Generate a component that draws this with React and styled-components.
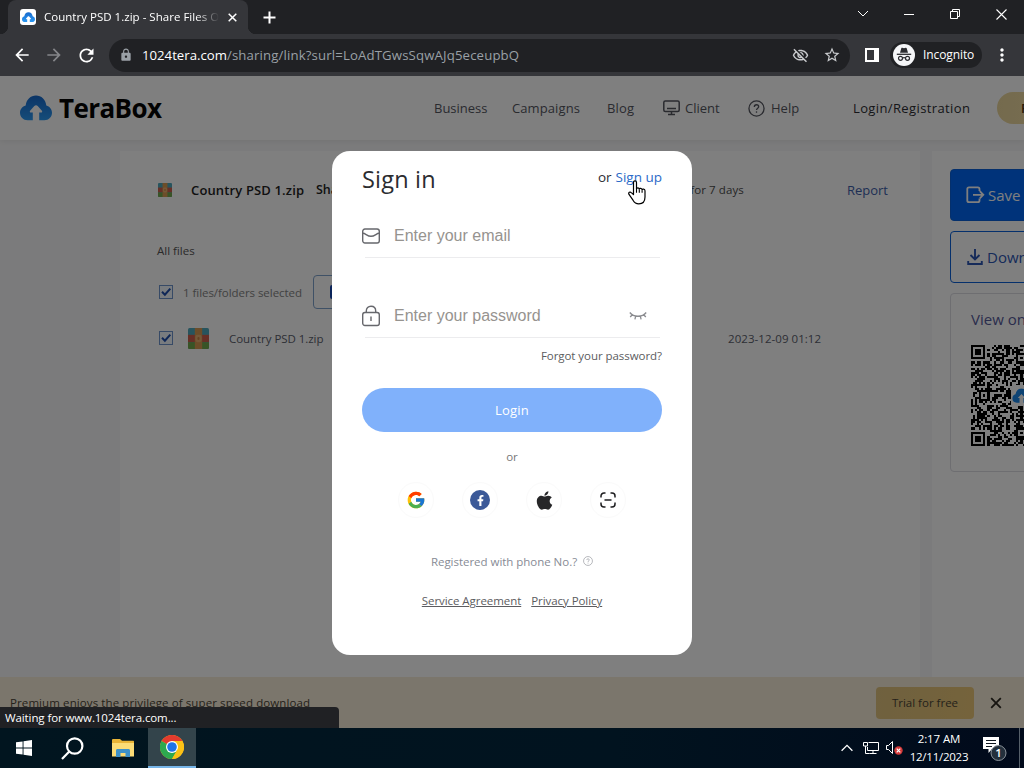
import React from "react";
import styled, { createGlobalStyle } from "styled-components";
import { FcGoogle } from "react-icons/fc";
import { FaApple, FaFacebookF } from "react-icons/fa";
import {
  MdArrowBack,
  MdArrowForward,
  MdLock,
  MdMoreVert,
  MdOutlineVisibilityOff,
  MdRefresh,
  MdStarBorder,
} from "react-icons/md";

// styles
const GlobalStyle = createGlobalStyle`
  * {
    box-sizing: border-box;
  }
  body {
    margin: 0;
    overflow: hidden;
    font-family: "Open Sans", "Noto Sans", sans-serif;
  }
  svg {
    display: block;
    flex: none;
  }
`;

const Screen = styled.div`
  width: 1024px;
  height: 768px;
  display: flex;
  flex-direction: column;
  overflow: hidden;
  background: #202124;
`;

const Text = styled.span`
  flex: none;
  white-space: nowrap;
  font-size: ${(p) => p.$size || 13}px;
  font-weight: ${(p) => p.$weight || 400};
  letter-spacing: ${(p) => p.$spacing || 0}px;
  color: ${(p) => p.$color || "inherit"};
  line-height: 20px;
`;

const TabStrip = styled.div`
  height: 34px;
  display: flex;
  align-items: center;
  padding-left: 8px;
  background: #202124;
  color: #fff;
`;

const Tab = styled.div`
  position: relative;
  width: 240px;
  height: 34px;
  padding: 0 10px 0 12px;
  display: flex;
  align-items: center;
  border-radius: 8px 8px 0 0;
  background: #35363a;
  &::before,
  &::after {
    content: "";
    position: absolute;
    bottom: 0;
    width: 8px;
    height: 8px;
  }
  &::before {
    left: -8px;
    background: radial-gradient(circle at 0 0, transparent 8px, #35363a 8.5px);
  }
  &::after {
    right: -8px;
    background: radial-gradient(circle at 100% 0, transparent 8px, #35363a 8.5px);
  }
`;

const Favicon = styled.div`
  width: 16px;
  height: 16px;
  margin-right: 8px;
  display: flex;
  align-items: center;
  justify-content: center;
  border-radius: 3px;
  background: #fff;
`;

const TabTitle = styled.div`
  width: 175px;
  margin-right: 9px;
  overflow: hidden;
  display: flex;
  mask-image: linear-gradient(to right, #000 152px, transparent 175px);
`;

const NewTab = styled.div`
  margin-left: 15px;
  flex: 1;
`;

const WindowButton = styled.div`
  width: 46px;
  height: 28px;
  margin-bottom: 6px;
  display: flex;
  align-items: center;
  justify-content: center;
`;

const Toolbar = styled.div`
  height: 42px;
  padding-left: 6px;
  display: flex;
  align-items: center;
  background: #35363a;
  color: #fff;
`;

const ToolButton = styled.div`
  width: 32px;
  margin-left: ${(p) => p.$before || 0}px;
  display: flex;
  justify-content: center;
  color: ${(p) => (p.$muted ? "#85868a" : "#fff")};
`;

const Omnibox = styled.div`
  width: 741px;
  height: 33px;
  margin-left: 7px;
  padding: 0 9px 0 10px;
  display: flex;
  align-items: center;
  border-radius: 17px;
  background: #202124;
  color: #9aa0a6;
`;

const Url = styled.div`
  flex: 1;
  margin-left: 9px;
  display: flex;
`;

const OmniIcon = styled.div`
  margin-left: 14px;
  color: #c8cacd;
`;

const SidePanel = styled.div`
  width: 14px;
  height: 14px;
  margin: 0 11px 0 15px;
  border: 2px solid #fff;
  border-right-width: 5px;
`;

const Incognito = styled.div`
  width: 92px;
  height: 26px;
  padding-left: 3px;
  display: flex;
  align-items: center;
  gap: 8px;
  border-radius: 13px;
  background: #202124;
`;

const Page = styled.div`
  position: relative;
  height: 652px;
  display: flex;
  flex-direction: column;
  background: #f7f7f8;
  overflow: hidden;
`;

const SiteHeader = styled.header`
  height: 64px;
  padding-left: 20px;
  display: flex;
  align-items: center;
  background: #fff;
  box-shadow: 0 1px 6px rgba(0, 0, 0, 0.08);
  z-index: 1;
`;

const Brand = styled.div`
  width: 414px;
  display: flex;
  align-items: center;
  gap: 7px;
  flex: none;
`;

const Nav = styled.nav`
  display: grid;
  grid-template-columns: 78px 95px 56px 85px 105px 144px 80px;
  align-items: center;
  color: #54565f;
`;

const NavItem = styled.div`
  display: flex;
  align-items: center;
  gap: ${(p) => p.$gap || 0}px;
`;

const PremiumPill = styled.div`
  height: 32px;
  padding-left: 24px;
  display: flex;
  align-items: center;
  border-radius: 16px;
  background: linear-gradient(90deg, #e9d59b, #f3dfab);
`;

const Content = styled.main`
  flex: 1;
  display: flex;
  gap: 12px;
  padding: 11px 0 0 120px;
`;

const FilesCard = styled.section`
  width: 800px;
  flex: none;
  padding: 18px 32px 0 38px;
  background: #fff;
`;

const TitleRow = styled.div`
  height: 42px;
  display: flex;
  align-items: center;
  color: #222;
`;

const Title = styled.div`
  display: flex;
  flex: none;
  width: 125px;
  margin-left: 19px;
`;

const Expiry = styled.div`
  width: 428px;
  display: flex;
  justify-content: space-between;
  margin-right: 103px;
`;

const Crumb = styled.div`
  height: 80px;
  margin-left: -1px;
  display: flex;
  align-items: center;
  color: #555;
`;

const SelectRow = styled.div`
  height: 34px;
  margin-top: -16px;
  padding-left: 1px;
  display: flex;
  align-items: center;
  color: #848484;
`;

const Checkbox = styled.div`
  width: 14px;
  height: 14px;
  display: flex;
  align-items: center;
  justify-content: center;
  border: 1px solid #6f94cc;
  background: #f2f8ff;
`;

const SelectLabel = styled.div`
  width: 130px;
  margin: 2px 0 0 10px;
  display: flex;
`;

const GhostButton = styled.div`
  width: 110px;
  height: 34px;
  padding-left: 16px;
  display: flex;
  align-items: center;
  border: 1px solid #7fa2cc;
  border-radius: 4px;
`;

const FileRow = styled.div`
  height: 58px;
  padding-left: 1px;
  display: grid;
  grid-template-columns: 29px 41px 499px 100px;
  align-items: center;
  color: #5b606c;
  ${Text} {
    padding-top: 1px;
  }
`;

const SideCard = styled.aside`
  width: 300px;
  flex: none;
  padding: 18px;
  display: flex;
  flex-direction: column;
  gap: 10px;
  background: #fff;
`;

const ActionButton = styled.div`
  height: 52px;
  padding-left: 15px;
  display: flex;
  align-items: center;
  gap: 3px;
  flex: none;
  border: 1px solid #0b61d8;
  border-radius: 4px;
  background: ${(p) => (p.$primary ? "#0067f4" : "#fff")};
  color: ${(p) => (p.$primary ? "#fff" : "#2d56b4")};
`;

const QrCard = styled.div`
  height: 179px;
  padding: 15px 0 0 20px;
  display: flex;
  flex-direction: column;
  gap: 16px;
  border: 1px solid #dcdce2;
  border-radius: 4px;
`;

const PremiumBar = styled.div`
  height: 51px;
  padding: 0 22px 0 10px;
  display: flex;
  align-items: center;
  background: #f6ecd8;
  color: #4b4436;
`;

const TrialButton = styled.div`
  width: 98px;
  height: 32px;
  margin: 0 16px 0 auto;
  display: flex;
  align-items: center;
  justify-content: center;
  border-radius: 4px;
  background: linear-gradient(100deg, #dfc27e, #ebc777);
`;

const Overlay = styled.div`
  position: absolute;
  inset: 0;
  z-index: 2;
  padding-top: 75px;
  display: flex;
  justify-content: center;
  align-items: flex-start;
  background: rgba(0, 0, 0, 0.5);
`;

const Modal = styled.div`
  width: 360px;
  height: 504px;
  padding: 0 30px;
  border-radius: 18px;
  background: #fff;
`;

const ModalHead = styled.div`
  height: 56px;
  display: flex;
  align-items: center;
  justify-content: space-between;
  color: #2b2c30;
`;

const HeadLinks = styled.div`
  margin-top: -4px;
  display: flex;
  gap: 4px;
`;

const Field = styled.label`
  height: 43px;
  margin-top: ${(p) => p.$top}px;
  padding-bottom: 2px;
  display: flex;
  align-items: center;
  gap: 14px;
  background: linear-gradient(#ececee, #ececee) 3px 100% / 295px 1px no-repeat;
`;

const Input = styled.input`
  width: 221px;
  padding: 0;
  border: 0;
  outline: 0;
  background: none;
  font: 16px "Liberation Sans", Arial, sans-serif;
  &::placeholder {
    color: #96938f;
  }
`;

const Line = styled.div`
  height: 36px;
  margin-top: ${(p) => p.$top || 0}px;
  display: flex;
  align-items: center;
  justify-content: ${(p) => p.$align || "center"};
  gap: ${(p) => p.$gap || 0}px;
  color: ${(p) => p.$color || "#5c5c60"};
`;

const LoginButton = styled.button`
  width: 300px;
  height: 44px;
  margin-top: 14px;
  padding: 0;
  display: flex;
  align-items: center;
  justify-content: center;
  border: 0;
  border-radius: 22px;
  background: #80b1fb;
  color: #fff;
  font-family: inherit;
`;

const Social = styled.div`
  width: 36px;
  height: 36px;
  display: flex;
  align-items: center;
  justify-content: center;
  border: 1px solid #fafafa;
  border-radius: 50%;
`;

const FacebookBadge = styled.div`
  width: 20px;
  height: 20px;
  display: flex;
  align-items: center;
  justify-content: center;
  border-radius: 50%;
  background: #3b5998;
  color: #fff;
`;

const PhoneHelp = styled.div`
  margin-bottom: 3px;
  color: #a3a5ab;
`;

const Underlined = styled(Text)`
  text-decoration: underline;
  text-underline-offset: 1px;
`;

const Pointer = styled.div`
  position: absolute;
  z-index: 3;
  left: 628px;
  top: 104px;
`;

const StatusBubble = styled.div`
  position: absolute;
  z-index: 3;
  left: 0;
  bottom: 0;
  width: 339px;
  height: 21px;
  padding-left: 5px;
  display: flex;
  align-items: center;
  border-radius: 0 4px 0 0;
  background: #202124;
  color: #fff;
`;

const Taskbar = styled.footer`
  height: 40px;
  display: flex;
  align-items: center;
  background: linear-gradient(90deg, #01151f, #01131f 60%, #010a1b);
  color: #fff;
`;

const TaskButton = styled.div`
  width: 48px;
  height: 40px;
  margin-left: ${(p) => p.$before || 0}px;
  display: flex;
  align-items: center;
  justify-content: center;
  background: ${(p) => (p.$active ? "#33444b" : "none")};
  border-bottom: ${(p) => (p.$active ? "2px solid #76b5e8" : "0")};
`;

const Tray = styled.div`
  margin-left: auto;
  display: flex;
  align-items: center;
`;

const TrayIcon = styled.div`
  margin-right: ${(p) => p.$after}px;
`;

const Clock = styled.div`
  width: 62px;
  margin: 0 13px 0 5px;
  display: flex;
  flex-direction: column;
  align-items: center;
  line-height: 18px;
  ${Text} {
    line-height: 18px;
  }
`;

const ShowDesktop = styled.div`
  width: 5px;
  height: 40px;
  border-left: 1px solid #56606a;
`;
// end styles

const Cloud = ({ width, arrow = "#fff" }) => (
  <svg width={width} height={(width * 26) / 32} viewBox="0 0 32 26">
    <defs>
      <linearGradient id="cloud" x1="0" y1="0" x2="0" y2="1">
        <stop offset="0" stopColor="#1769cc" />
        <stop offset="1" stopColor="#2b9af4" />
      </linearGradient>
    </defs>
    <path
      fill="url(#cloud)"
      d="M7.6 25.3C3.3 25.3 0 22 0 17.8c0-3.7 2.3-6.5 5.7-7.4C6.4 4.5 10.6.5 16 .5s9.6 4 10.3 9.9c3.4.9 5.7 3.7 5.7 7.4 0 4.2-3.3 7.5-7.6 7.5z"
    />
    <path
      fill={arrow}
      d="M16 10.2c.7 0 1.2.3 1.7.8l4.200 4.700c.7.9.2 1.900-.8 1.900h-1.900v8.400h-6.400v-8.400h-1.900c-1 0-1.500-1-.8-1.900l4.200-4.700c.5-.5 1-.8 1.700-.8z"
    />
  </svg>
);

const ZipIcon = ({ size }) => (
  <svg width={size} height={size} viewBox="0 0 20 20">
    <rect width="20" height="20" rx="1.5" fill="#4fa9bd" />
    <rect y="6.500" width="20" height="7" fill="#cf5f4c" />
    <path d="M0 13.500h20v5a1.500 1.500 0 0 1-1.500 1.500h-17A1.500 1.500 0 0 1 0 18.500z" fill="#72a94c" />
    <rect x="6.500" width="7" height="20" fill="#d89a52" />
    <rect x="7" y="6.500" width="6" height="7" rx="2" fill="#e8b070" />
    <rect x="9" y="8.500" width="2" height="3" rx="1" fill="#c98442" />
  </svg>
);

const Check = () => (
  <svg width="12" height="12" viewBox="0 0 12 12">
    <path d="M2 5.800 4.900 8.700 10.300 2.700" fill="none" stroke="#1f4fae" strokeWidth="2" />
  </svg>
);

const QR_SIZE = 49;

const inFinder = (x, y) => {
  const near = (a) => a < 8;
  const far = (a) => a > QR_SIZE - 9;
  return (near(x) && near(y)) || (far(x) && near(y)) || (near(x) && far(y));
};

// square rings: a 7 cell finder or a 5 cell alignment mark
const ring = (x, y, cx, cy, r) => {
  const d = Math.max(Math.abs(x - cx), Math.abs(y - cy));
  if (d > r) return null;
  return r === 3 ? d !== 2 : d !== 1;
};

const qrPath = () => {
  let seed = 20231;
  let path = "";
  const marks = [];
  [6, 24, 42].forEach((cx) => [6, 24, 42].forEach((cy) => marks.push([cx, cy])));
  for (let y = 0; y < QR_SIZE; y++) {
    for (let x = 0; x < QR_SIZE; x++) {
      seed = (seed * 1103515245 + 12345) % 2147483648;
      let on = seed / 2147483648 > 0.47;
      if (inFinder(x, y)) {
        on = [
          [3, 3],
          [45, 3],
          [3, 45],
        ].some(([cx, cy]) => ring(x, y, cx, cy, 3));
      } else {
        marks.forEach(([cx, cy]) => {
          if (inFinder(cx, cy)) return;
          const mark = ring(x, y, cx, cy, 2);
          if (mark !== null) on = mark;
        });
      }
      if (on) path += `M${x} ${y}h1v1h-1z`;
    }
  }
  return path;
};

const QrCode = () => (
  <svg width="101" height="101" viewBox="0 0 49 49" shapeRendering="crispEdges">
    <path d={qrPath()} fill="#000" />
    <rect x="19.500" y="19.500" width="10" height="10" rx="1" fill="#fff" />
    <svg x="20" y="21" width="9" height="7.300" viewBox="0 0 32 26" shapeRendering="auto">
      <path
        fill="#1b86e8"
        d="M7.600 25C3.300 25 0 22 0 17.800c0-3.700 2.300-6.500 5.700-7.400C6.400 4.500 10.600.5 16 .5s9.600 4 10.300 9.900c3.400.9 5.700 3.700 5.700 7.400 0 4.200-3.300 7.200-7.600 7.200h-5v-8h3L16 10l-6.400 7h3v8z"
      />
    </svg>
  </svg>
);

const IncognitoIcon = () => (
  <svg width="22" height="22" viewBox="0 0 22 22">
    <circle cx="11" cy="11" r="11" fill="#f5f6f8" />
    <path d="M8.300 4.200c.2-.5.6-.6 1-.4l1.700.5 1.700-.5c.4-.2.8.1 1 .5L15 8.700H7z" fill="#2b2c30" />
    <path d="M3.800 10.300h14.400" stroke="#2b2c30" strokeWidth="1.300" />
    <g fill="none" stroke="#2b2c30" strokeWidth="1.200">
      <circle cx="7.500" cy="14.300" r="2" />
      <circle cx="14.500" cy="14.300" r="2" />
      <path d="M9.500 14c1-.6 2-.6 3 0" />
    </g>
  </svg>
);

const HelpIcon = ({ size, weight = 1.4 }) => (
  <svg width={size} height={size} viewBox="0 0 18 18" fill="none" stroke="currentColor" strokeWidth={weight}>
    <circle cx="9" cy="9" r="8" />
    <path d="M6.700 7.300c0-1.400 1-2.300 2.300-2.300s2.300.8 2.300 2.100c0 1.600-2.300 1.700-2.300 3.600" />
    <path d="M9 12v1.500" />
  </svg>
);

const MonitorIcon = () => (
  <svg width="17" height="16" viewBox="0 0 17 16" fill="none" stroke="currentColor" strokeWidth="1.500">
    <rect x=".8" y="1" width="15.400" height="10.400" rx="1.500" />
    <path d="M4 8.500h9M8.500 11.500v3M5 14.600h7" />
  </svg>
);

const MailIcon = () => (
  <svg width="18" height="16" viewBox="0 0 18 16" fill="none" stroke="#66676c" strokeWidth="1.400">
    <rect x=".7" y="1" width="16.600" height="14" rx="2.200" />
    <path d="M1 5.300c2.500 0 4.200 3 8 3s5.500-3 8-3" />
  </svg>
);

const LockIcon = () => (
  <svg width="18" height="22" viewBox="0 0 18 22" fill="none" stroke="#66676c" strokeWidth="1.400">
    <rect x=".7" y="7.500" width="16.600" height="13" rx="2.200" />
    <path d="M4.300 7.500V6C4.300 3.200 6.200 1.200 9 1.200s4.700 2 4.700 4.800v1.500M9 11.500v4.500" />
  </svg>
);

const ClosedEye = () => (
  <svg width="18" height="10" viewBox="0 0 18 10" fill="none" stroke="#8b8c90" strokeWidth="1.300">
    <path d="M.8 1.500c4 5 12.400 5 16.400 0M3.300 3.700 1.200 6M14.700 3.700 16.800 6M6.700 5.200 5.900 8.300M11.300 5.200l.8 3.100" />
  </svg>
);

const ScanIcon = () => (
  <svg width="16" height="16" viewBox="0 0 16 16" fill="none" stroke="#1d1d1f" strokeWidth="1.500">
    <path d="M1 5.500V4a3 3 0 0 1 3-3h1.500M10.500 1H12a3 3 0 0 1 3 3v1.500M15 10.500V12a3 3 0 0 1-3 3h-1.500M5.500 15H4a3 3 0 0 1-3-3v-1.500M4.500 8h7" />
  </svg>
);

const SaveIcon = () => (
  <svg width="19" height="18" viewBox="0 0 19 18" fill="none" stroke="currentColor" strokeWidth="1.800">
    <path d="M13.500 5V3c0-1-.5-1.700-1.700-1.700H3C1.800 1.300 1.300 2 1.300 3v11.500c0 1 .5 1.700 1.700 1.700h8.800c1.200 0 1.700-.7 1.700-1.700v-2" />
    <path d="M7 8.800h10M13.800 5.200l3.500 3.600-3.500 3.600" />
  </svg>
);

const DownloadIcon = () => (
  <svg width="18" height="18" viewBox="0 0 18 18" fill="none" stroke="currentColor" strokeWidth="1.900">
    <path d="M9 1v10M4.500 7 9 11.500 13.500 7M2.200 13v3h13.600v-3" />
  </svg>
);

const HandCursor = () => (
  <svg width="18" height="25" viewBox="0 0 18 25">
    <path
      fill="#fff"
      stroke="#000"
      strokeWidth="1.200"
      strokeLinejoin="round"
      d="M5.500 14.500V2.500c0-2.300 3-2.300 3 0V9c0-1.500 2.700-1.500 2.800.2.200-1.400 2.700-1.200 2.800.6.300-1.200 2.800-1 2.900.9V17c0 4.500-2.500 6.800-6.200 6.800-3 0-4.500-1.300-5.800-3.600L1 14.400c-1-2 1-3 2.300-1.800z"
    />
    <path d="M8.500 8.500v4.200M11.300 9.500v3.200M14.100 10.200v2.500" stroke="#000" strokeWidth="1.100" />
  </svg>
);

const ChromeIcon = () => (
  <svg width="24" height="24" viewBox="0 0 24 24">
    <circle cx="12" cy="12" r="12" fill="#fbc116" />
    <path d="M12 12 1.600 6A12 12 0 0 1 22.400 6z" fill="#e33b2e" />
    <path d="M12 12 1.600 6A12 12 0 0 0 12 24l5.200-9z" fill="#2da94f" />
    <path d="M12 6h10.400A12 12 0 0 1 12 24l5.200-9z" fill="#fbc116" />
    <circle cx="12" cy="12" r="6" fill="#fff" />
    <circle cx="12" cy="12" r="4.800" fill="#1f74e8" />
  </svg>
);

const BrowserChrome = () => (
  <>
    <TabStrip>
      <Tab>
        <Favicon>
          <Cloud width={13} />
        </Favicon>
        <TabTitle>
          <Text $size={11.5} $spacing={0.02}>
            Country PSD 1.zip - Share Files Online
          </Text>
        </TabTitle>
        <svg width="9" height="9" viewBox="0 0 9 9" stroke="#fff" strokeWidth="1.500">
          <path d="M.7.7l7.600 7.600M8.300.7.7 8.300" />
        </svg>
      </Tab>
      <NewTab>
        <svg width="13" height="13" viewBox="0 0 13 13" stroke="#fff" strokeWidth="2">
          <path d="M6.500.5v12M.5 6.500h12" />
        </svg>
      </NewTab>
      <WindowButton>
        <svg width="12" height="8" viewBox="0 0 12 8" fill="none" stroke="#fff">
          <path d="M1 1l5 5 5-5" />
        </svg>
      </WindowButton>
      <WindowButton>
        <svg width="10" height="1" viewBox="0 0 10 1">
          <rect width="10" height="1" fill="#fff" />
        </svg>
      </WindowButton>
      <WindowButton>
        <svg width="10" height="10" viewBox="0 0 10 10" fill="none" stroke="#fff">
          <path d="M.5 2.500h7v7h-7zM2.500 2.500v-2h7v7h-2" />
        </svg>
      </WindowButton>
      <WindowButton>
        <svg width="11" height="11" viewBox="0 0 11 11" stroke="#fff" strokeWidth="1.100">
          <path d="M.5.5l10 10M10.500.5l-10 10" />
        </svg>
      </WindowButton>
    </TabStrip>
    <Toolbar>
      <ToolButton>
        <MdArrowBack size={20} />
      </ToolButton>
      <ToolButton $muted>
        <MdArrowForward size={20} />
      </ToolButton>
      <ToolButton>
        <MdRefresh size={21} />
      </ToolButton>
      <Omnibox>
        <MdLock size={14} />
        <Url>
          <Text $size={13.2} $color="#fff">
            1024tera.com
          </Text>
          <Text $size={13.2} $spacing={0.14}>
            /sharing/link?surl=LoAdTGwsSqwAJq5eceupbQ
          </Text>
        </Url>
        <OmniIcon>
          <MdOutlineVisibilityOff size={17} />
        </OmniIcon>
        <OmniIcon>
          <MdStarBorder size={18} />
        </OmniIcon>
      </Omnibox>
      <SidePanel />
      <Incognito>
        <IncognitoIcon />
        <Text $size={12} $spacing={-0.1}>
          Incognito
        </Text>
      </Incognito>
      <ToolButton $before={4}>
        <MdMoreVert size={20} />
      </ToolButton>
    </Toolbar>
  </>
);

const SiteNav = () => (
  <SiteHeader>
    <Brand>
      <Cloud width={32} />
      <Text $size={26} $weight={700} $spacing={-0.6} $color="#050505">
        TeraBox
      </Text>
    </Brand>
    <Nav>
      <Text>Business</Text>
      <Text $spacing={0.1}>Campaigns</Text>
      <Text $spacing={0.2}>Blog</Text>
      <NavItem $gap={5}>
        <MonitorIcon />
        <Text>Client</Text>
      </NavItem>
      <NavItem $gap={6}>
        <HelpIcon size={17} />
        <Text>Help</Text>
      </NavItem>
      <Text $weight={500} $spacing={0.38} $color="#2c2d32">
        Login/Registration
      </Text>
      <PremiumPill>
        <Text $weight={600} $color="#4a3410">
          Premium
        </Text>
      </PremiumPill>
    </Nav>
  </SiteHeader>
);

const Files = () => (
  <FilesCard>
    <TitleRow>
      <ZipIcon size={14} />
      <Title>
        <Text $weight={600} $spacing={0.14}>
          Country PSD 1.zip
        </Text>
      </Title>
      <Expiry>
        <Text $size={12.5} $weight={600}>
          Share
        </Text>
        <Text $size={11.5} $spacing={0.1} $color="#4c4c4c">
          for 7 days
        </Text>
      </Expiry>
      <Text $color="#3d5eaa">Report</Text>
    </TitleRow>
    <Crumb>
      <Text $size={11.5}>All files</Text>
    </Crumb>
    <SelectRow>
      <Checkbox>
        <Check />
      </Checkbox>
      <SelectLabel>
        <Text $size={11.5} $spacing={-0.05}>
          1 files/folders selected
        </Text>
      </SelectLabel>
      <GhostButton>
        <svg width="14" height="14" viewBox="0 0 14 14">
          <rect width="14" height="14" rx="2" fill="#1748b5" />
        </svg>
      </GhostButton>
    </SelectRow>
    <FileRow>
      <Checkbox>
        <Check />
      </Checkbox>
      <ZipIcon size={21} />
      <Text $size={11.5} $spacing={-0.05}>
        Country PSD 1.zip
      </Text>
      <Text $size={11.5} $spacing={0.05}>
        2023-12-09 01:12
      </Text>
    </FileRow>
  </FilesCard>
);

const Side = () => (
  <SideCard>
    <ActionButton $primary>
      <SaveIcon />
      <Text $size={15}>Save to TeraBox</Text>
    </ActionButton>
    <ActionButton>
      <DownloadIcon />
      <Text $size={15}>Download</Text>
    </ActionButton>
    <QrCard>
      <Text $size={15} $color="#555a9a">
        View on Phone
      </Text>
      <QrCode />
    </QrCard>
  </SideCard>
);

const SignIn = () => (
  <Modal>
    <ModalHead>
      <Text $size={23.5} $weight={500} $spacing={0.2}>
        Sign in
      </Text>
      <HeadLinks>
        <Text $size={13.5}>or</Text>
        <Text $size={13.5} $color="#2a6ac8">
          Sign up
        </Text>
      </HeadLinks>
    </ModalHead>
    <Field $top={8}>
      <MailIcon />
      <Input placeholder="Enter your email" />
    </Field>
    <Field $top={37}>
      <LockIcon />
      <Input placeholder="Enter your password" />
      <ClosedEye />
    </Field>
    <Line $align="flex-end">
      <Text $size={11.5} $spacing={-0.05}>
        Forgot your password?
      </Text>
    </Line>
    <LoginButton>
      <Text $weight={500} $spacing={0.2}>
        Login
      </Text>
    </LoginButton>
    <Line $top={7} $color="#777">
      <Text $size={11.5}>or</Text>
    </Line>
    <Line $top={7} $gap={28}>
      <Social>
        <FcGoogle size={20} />
      </Social>
      <Social>
        <FacebookBadge>
          <FaFacebookF size={11} />
        </FacebookBadge>
      </Social>
      <Social>
        <FaApple size={21} color="#262628" />
      </Social>
      <Social>
        <ScanIcon />
      </Social>
    </Line>
    <Line $top={26} $gap={6} $color="#878b95">
      <Text $size={11.5} $spacing={-0.03}>
        Registered with phone No.?
      </Text>
      <PhoneHelp>
        <HelpIcon size={10} />
      </PhoneHelp>
    </Line>
    <Line $top={3} $gap={10}>
      <Underlined $size={11.5} $spacing={-0.06}>
        Service Agreement
      </Underlined>
      <Underlined $size={11.5} $spacing={-0.06}>
        Privacy Policy
      </Underlined>
    </Line>
  </Modal>
);

const WindowsTaskbar = () => (
  <Taskbar>
    <TaskButton>
      <svg width="16" height="16" viewBox="0 0 16 16" fill="#fff">
        <path d="M0 2.300 6.600 1.400v6.100H0zM7.500 1.300 16 0v7.500H7.500zM0 8.400h6.600v6.200L0 13.700zM7.500 8.400H16V16l-8.500-1.300z" />
      </svg>
    </TaskButton>
    <TaskButton>
      <svg width="23" height="23" viewBox="0 0 23 23" fill="none" stroke="#fff" strokeWidth="2.200">
        <circle cx="13.700" cy="9" r="7.700" />
        <path d="M8.300 14.600 1 22" />
      </svg>
    </TaskButton>
    <TaskButton $before={3}>
      <svg width="22" height="18" viewBox="0 0 22 18">
        <path d="M0 1.200C0 .5.500 0 1.200 0H8l2 1.800h11c.6 0 1 .4 1 1V17H0z" fill="#e9b437" />
        <path d="M0 4h22v13.500H0z" fill="#fcdc76" />
        <path d="M4 18v-6.500c0-1 .6-1.600 1.500-1.600h11c.9 0 1.500.6 1.500 1.600V18h-4.500v-4h-5v4z" fill="#3e91c8" />
      </svg>
    </TaskButton>
    <TaskButton $active $before={1}>
      <ChromeIcon />
    </TaskButton>
    <Tray>
      <TrayIcon $after={10}>
        <svg width="12" height="8" viewBox="0 0 12 8" fill="none" stroke="#fff" strokeWidth="1.300">
          <path d="M.6 6.800 6 1.400l5.400 5.400" />
        </svg>
      </TrayIcon>
      <TrayIcon $after={7}>
        <svg width="16" height="14" viewBox="0 0 16 14" fill="none" stroke="#fff">
          <path d="M5.500 1.500h10v8h-11V6M10 9.500v3M6.500 12.500h7M.5 1.500h4V5h-4zM2.500 5v7.500h4" />
        </svg>
      </TrayIcon>
      <TrayIcon $after={0}>
        <svg width="17" height="14" viewBox="0 0 17 14">
          <path d="M.5 4.500h2l4-4v12l-4-4h-2z" fill="none" stroke="#fff" />
          <circle cx="12.500" cy="9.500" r="4.200" fill="#d63a3a" />
          <path d="M10.700 7.700l3.600 3.600M14.300 7.700l-3.600 3.600" stroke="#fff" strokeWidth="1.200" />
        </svg>
      </TrayIcon>
      <Clock>
        <Text $size={11.5} $spacing={-0.1}>
          2:17 AM
        </Text>
        <Text $size={11.5} $spacing={-0.25}>
          12/11/2023
        </Text>
      </Clock>
      <TrayIcon $after={11}>
        <svg width="25" height="25" viewBox="0 0 25 25">
          <path d="M0 1h16v12H9l-3.500 4v-4H0z" fill="#fff" />
          <path d="M3 4.500h10M3 7.500h10M3 10.500h6" stroke="#101820" />
          <circle cx="15.500" cy="17" r="7.500" fill="#24303c" stroke="#8a929a" />
          <text x="15.500" y="21" fill="#fff" fontSize="11.500" fontWeight="600" textAnchor="middle">
            1
          </text>
        </svg>
      </TrayIcon>
      <ShowDesktop />
    </Tray>
  </Taskbar>
);

const App = () => {
  return (
    <Screen>
      <GlobalStyle />
      <BrowserChrome />
      <Page>
        <SiteNav />
        <Content>
          <Files />
          <Side />
        </Content>
        <PremiumBar>
          <Text $size={11.5} $spacing={0.1}>
            Premium enjoys the privilege of super speed download
          </Text>
          <TrialButton>
            <Text $size={11.5} $weight={500}>
              Trial for free
            </Text>
          </TrialButton>
          <svg width="12" height="12" viewBox="0 0 12 12" stroke="#2c2820" strokeWidth="1.800">
            <path d="M1.200 1.200l9.600 9.600M10.800 1.200l-9.600 9.600" />
          </svg>
        </PremiumBar>
        <Overlay>
          <SignIn />
        </Overlay>
        <Pointer>
          <HandCursor />
        </Pointer>
        <StatusBubble>
          <Text $size={11.5} $spacing={-0.1}>
            Waiting for www.1024tera.com...
          </Text>
        </StatusBubble>
      </Page>
      <WindowsTaskbar />
    </Screen>
  );
};

export default App;
